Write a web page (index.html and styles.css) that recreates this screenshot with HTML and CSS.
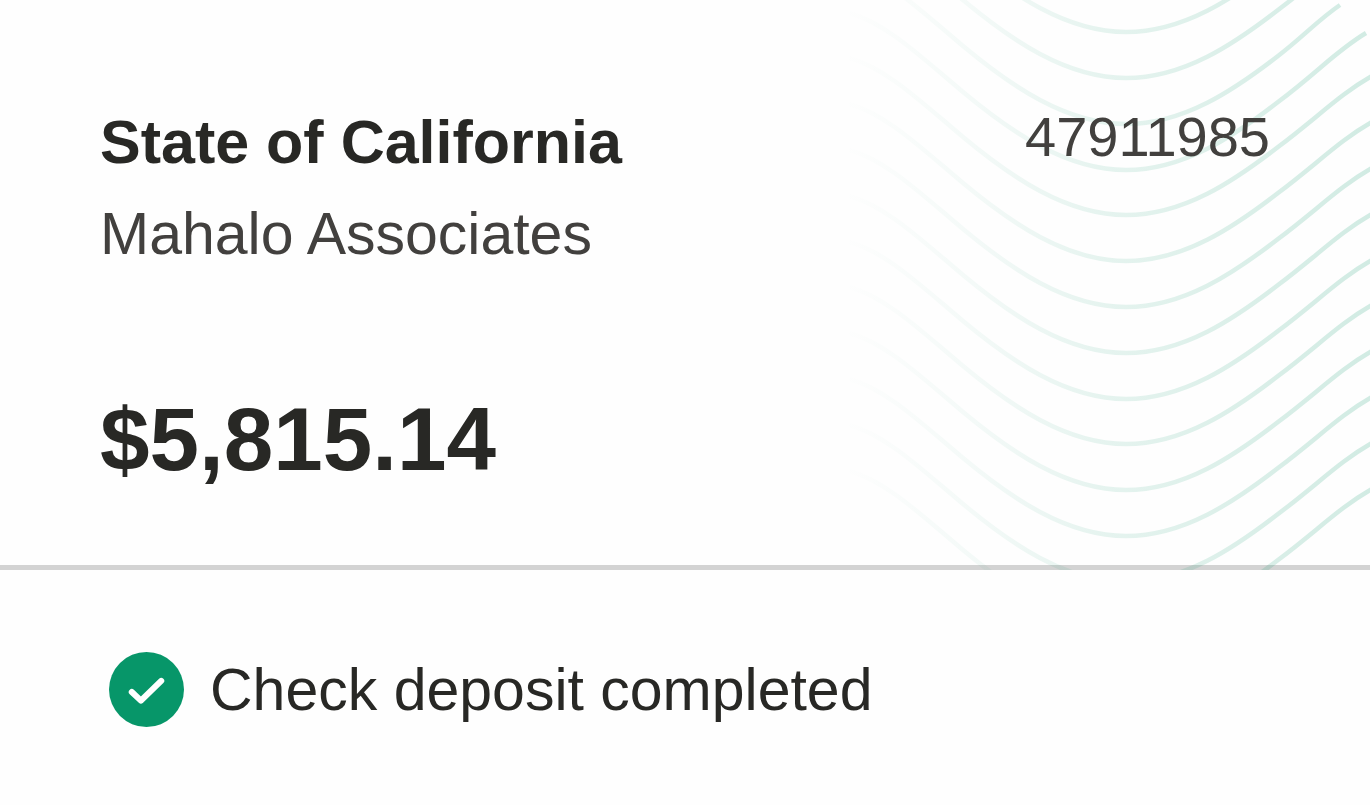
FILE: index.html
```html
<!DOCTYPE html>
<html lang="en">

<head>
    <meta charset="UTF-8">
    <meta name="viewport" content="width=device-width, initial-scale=1.0">
    <title>Check deposit</title>
    <link rel="stylesheet" href="styles.css">
</head>

<body>
    <main class="deposit">
        <section class="check">
            <svg class="waves" width="530" height="570" viewBox="0 0 530 570" aria-hidden="true">
                <defs>
                    <linearGradient id="fade" gradientUnits="userSpaceOnUse" x1="0" y1="0" x2="530" y2="0">
                        <stop offset="0" stop-color="#079669" stop-opacity="0" />
                        <stop offset="0.25" stop-color="#079669" stop-opacity="0.04" />
                        <stop offset="0.5" stop-color="#079669" stop-opacity="0.1" />
                        <stop offset="1" stop-color="#079669" stop-opacity="0.18" />
                    </linearGradient>
                    <path id="wave" d="M9 -157C46 -147 80 -114 123 -78C171 -38 226 0 286 0C344 0 394 -34 438 -68C478 -98 500 -121 532 -139" />
                    <path id="wave-cut" d="M9 -157C46 -147 80 -114 123 -78C171 -38 226 0 286 0C344 0 394 -34 438 -68C478 -98 496 -119 526 -137" />
                    <path id="wave-short" d="M9 -157C46 -147 80 -114 123 -78C171 -38 226 0 286 0C344 0 394 -34 438 -68C464 -88 478 -104 500 -119" />
                </defs>
                <g fill="none" stroke="url(#fade)" stroke-width="4.5">
                    <use href="#wave" y="32" />
                    <use href="#wave" y="78" />
                    <use href="#wave-short" y="124" />
                    <use href="#wave-cut" y="170" />
                    <use href="#wave" y="215" />
                    <use href="#wave" y="261" />
                    <use href="#wave" y="307" />
                    <use href="#wave" y="353" />
                    <use href="#wave" y="399" />
                    <use href="#wave" y="444" />
                    <use href="#wave" y="490" />
                    <use href="#wave" y="536" />
                    <use href="#wave" y="582" />
                    <use href="#wave" y="628" />
                </g>
            </svg>
            <div class="check-head">
                <div>
                    <h1 class="payer">State of California</h1>
                    <p class="payee">Mahalo Associates</p>
                </div>
                <p class="number">47911985</p>
            </div>
            <p class="amount">$5,815.14</p>
        </section>
        <section class="status">
            <svg class="status-icon" viewBox="0 0 74 74" aria-hidden="true">
                <circle cx="37" cy="37" r="37" fill="#079669" />
                <path d="M22.500 39.500L31.500 48L51.500 28.500" fill="none" stroke="#fff" stroke-width="6" stroke-linecap="round" stroke-linejoin="round" />
            </svg>
            <p class="status-text">Check deposit completed</p>
        </section>
    </main>
</body>

</html>
```

FILE: styles.css
```css
body {
    margin: 0;
    background-color: #fefefe;
    color: #282825;
    font-family: "Liberation Sans", Arial, sans-serif;
}

h1,
p {
    margin: 0;
}

.check {
    position: relative;
    padding: 106px 100px 76px;
    border-bottom: 5px solid #d3d3d3;
}

/* decoration behind the check details */
.waves {
    position: absolute;
    top: 0;
    right: 0;
}

.check-head {
    position: relative;
    display: flex;
    justify-content: space-between;
    align-items: flex-start;
}

.payer {
    font-size: 61px;
    font-weight: bold;
    line-height: 72px;
}

.payee {
    margin-top: 20px;
    color: #42403e;
    font-size: 59px;
    line-height: 72px;
}

.number {
    color: #42403e;
    font-size: 56px;
    line-height: 62px;
}

.amount {
    position: relative;
    margin-top: 119px;
    font-size: 89px;
    font-weight: bold;
    line-height: 100px;
}

.status {
    display: flex;
    align-items: center;
    gap: 26px;
    padding: 82px 100px 79px 109px;
}

.status-icon {
    flex: none;
    width: 75px;
    height: 75px;
}

.status-text {
    font-size: 59px;
    line-height: 72px;
}
```
